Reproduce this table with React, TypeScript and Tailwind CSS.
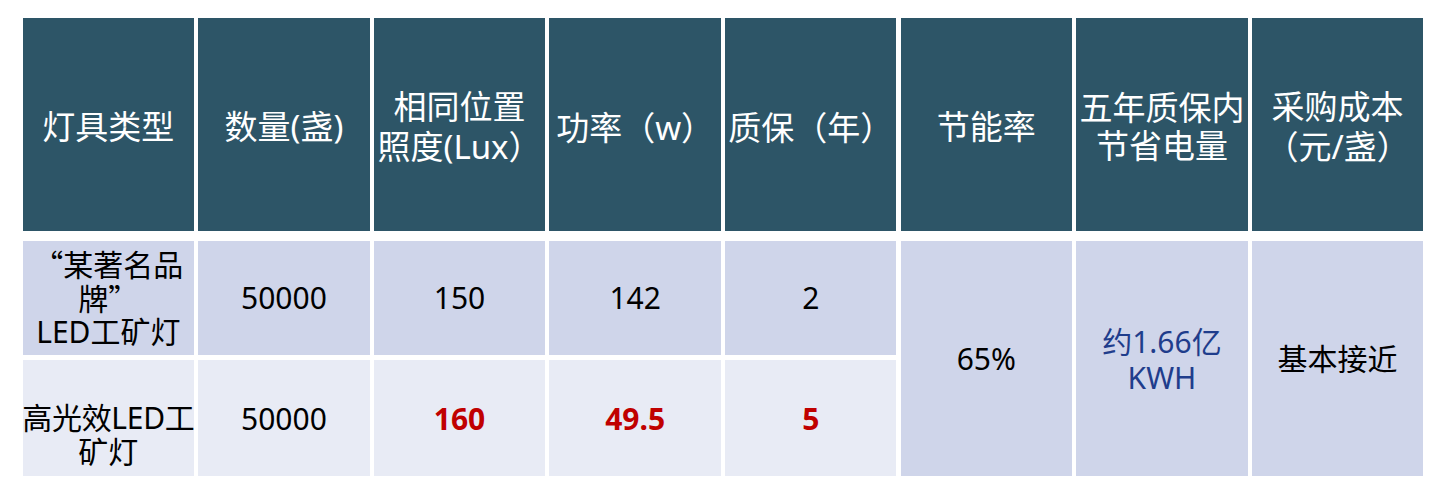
import React from "react";

const font = { fontFamily: '"Noto Sans", "Noto Sans CJK SC", sans-serif' };

const cjk = "font-['Noto_Sans_CJK_SC',sans-serif]";

function H({ children }: { children: React.ReactNode }) {
  return (
    <div className="bg-[#2d5567] text-white flex items-center justify-center text-center text-[33px] leading-[38px] pt-[5px]">
      <div>{children}</div>
    </div>
  );
}

function B({
  children,
  band,
  className = "",
}: {
  children: React.ReactNode;
  band: 1 | 2;
  className?: string;
}) {
  return (
    <div
      className={
        (band === 1 ? "bg-[#cfd5ea] " : "bg-[#e8ebf5] ") +
        "flex items-center justify-center text-center text-[30px] leading-[33px] text-black " +
        className
      }
    >
      <div>{children}</div>
    </div>
  );
}

export default function App() {
  return (
    <div className="w-[1453px] h-[502px] bg-white" style={font}>
      <div className="pt-[18px] pl-[22.7px] w-[1423.2px]">
        <div className="grid grid-cols-8 gap-x-[4.3px] h-[212.7px]">
          <H>灯具类型</H>
          <H>数量(盏)</H>
          <H>
            相同位置
            <br />
            照度(Lux<span className={cjk}>）</span>
          </H>
          <H>
            功率<span className={cjk}>（</span>w<span className={cjk}>）</span>
          </H>
          <H>
            质保<span className={cjk}>（年）</span>
          </H>
          <H>节能率</H>
          <H>
            五年质保内
            <br />
            节省电量
          </H>
          <H>
            采购成本
            <br />
            <span className={cjk}>（</span>元/盏<span className={cjk}>）</span>
          </H>
        </div>
        <div className="mt-[10px] grid grid-cols-8 gap-x-[4.3px] gap-y-[5px] grid-rows-[114px_116.7px]">
          <B band={1}>
            <span className={cjk}>“</span>某著名品
            <br />
            牌<span className={cjk}>”</span>
            <br />
            LED工矿灯
          </B>
          <B band={1}>50000</B>
          <B band={1}>150</B>
          <B band={1}>142</B>
          <B band={1}>2</B>
          <B band={1} className="row-span-2">
            65%
          </B>
          <B band={1} className="row-span-2 leading-[36px] pt-[2px]">
            <span className="text-[#1f3d8c]">
              约1.66亿
              <br />
              KWH
            </span>
          </B>
          <B band={1} className="row-span-2">
            基本接近
          </B>
          <B band={2} className="leading-[34px] pt-[33px]">
            <span className="whitespace-nowrap tracking-[-0.3px]">高光效LED工</span>
            <br />
            矿灯
          </B>
          <B band={2}>50000</B>
          <B band={2}>
            <span className="font-bold text-[#c00000]">160</span>
          </B>
          <B band={2}>
            <span className="font-bold text-[#c00000]">49.5</span>
          </B>
          <B band={2}>
            <span className="font-bold text-[#c00000]">5</span>
          </B>
        </div>
      </div>
    </div>
  );
}
